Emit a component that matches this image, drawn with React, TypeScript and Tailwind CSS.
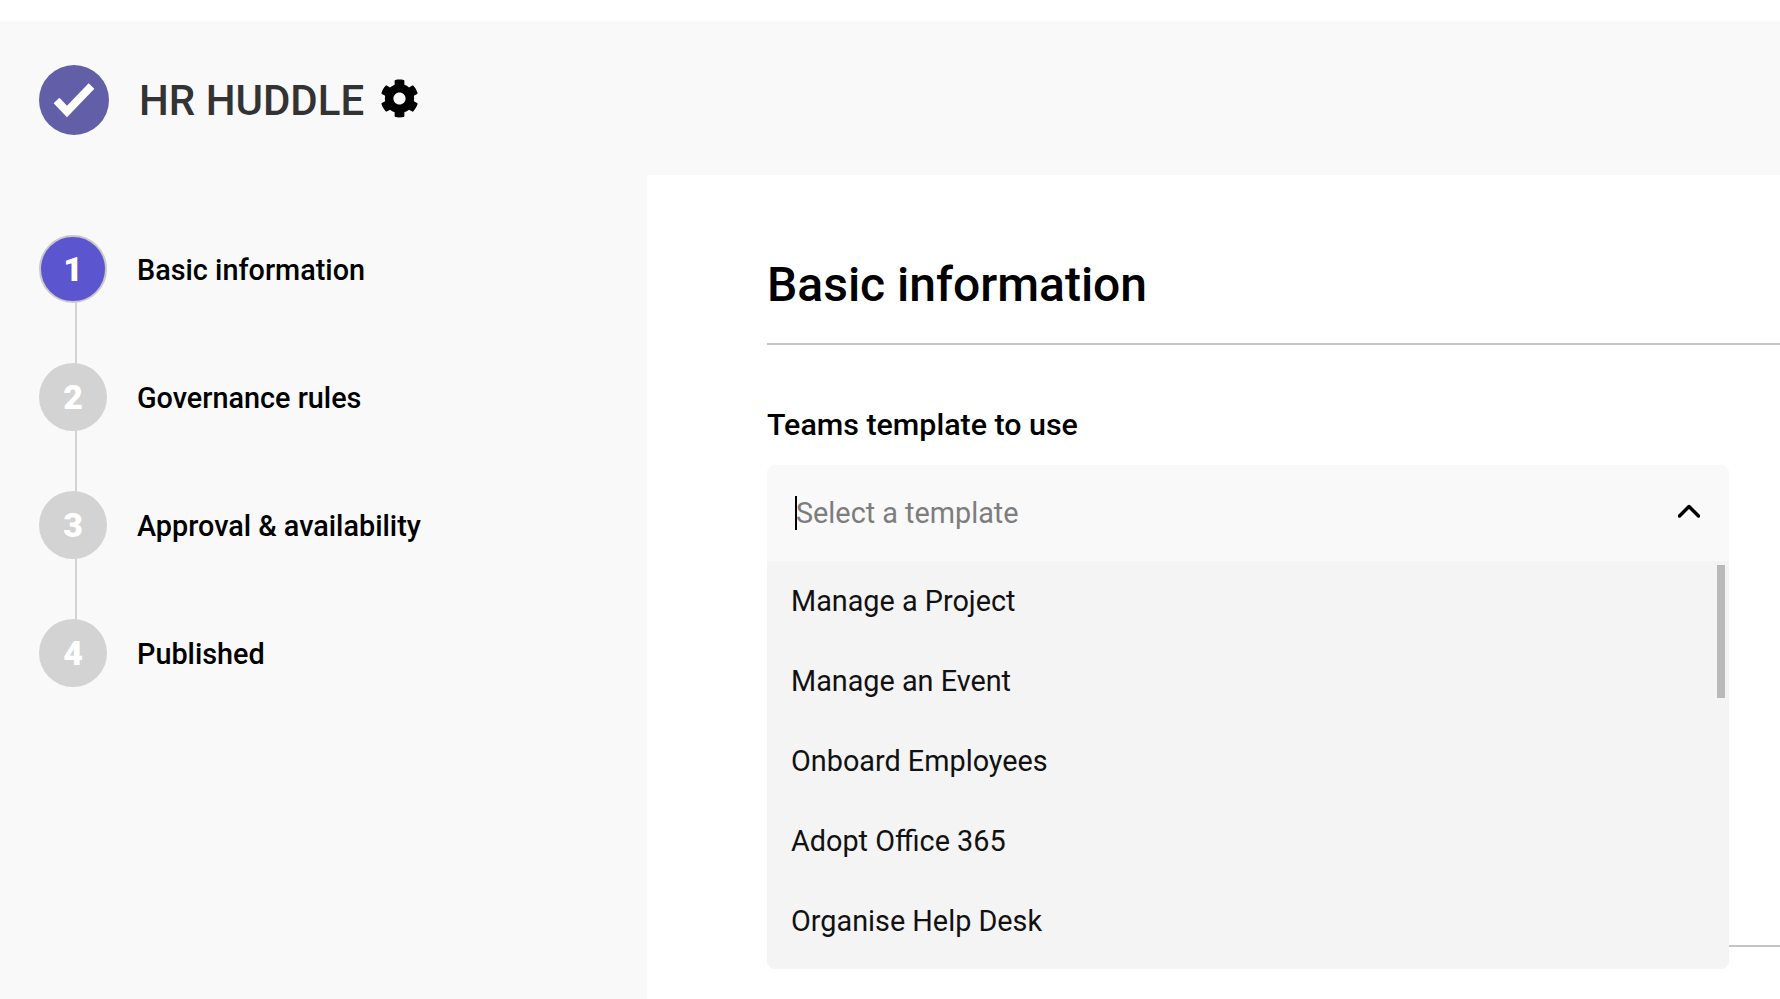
import React from "react";
import { FaCog } from "react-icons/fa";

const steps = [
  { num: 1, label: "Basic information", active: true },
  { num: 2, label: "Governance rules", active: false },
  { num: 3, label: "Approval & availability", active: false },
  { num: 4, label: "Published", active: false },
];

const templates = [
  "Manage a Project",
  "Manage an Event",
  "Onboard Employees",
  "Adopt Office 365",
  "Organise Help Desk",
];

const Stepper = () => (
  <div className="relative flex flex-col gap-[60px] pl-[39px] pt-[60px]">
    <div className="absolute left-[75px] top-[100px] h-[400px] w-[2px] bg-[#d3d3d3]" />
    {steps.map((step) => (
      <div key={step.num} className="relative flex h-[68px] items-center">
        <div
          className={`flex h-[68px] w-[68px] items-center justify-center rounded-full text-[34px] font-black text-white ${
            step.active ? "border-2 border-[#c9c9c9] bg-[#5b55d0]" : "bg-[#d3d3d3]"
          }`}
        >
          {step.num}
        </div>
        <span className="ml-[30px] pt-[4px] text-[28.8px] font-medium text-black">{step.label}</span>
      </div>
    ))}
  </div>
);

const TemplateSelect = () => (
  <div className="absolute left-0 top-[60px] w-[962px]">
    <div className="flex h-[96px] items-center justify-between rounded-t-lg bg-[#f9f9f9] pl-[28px] pr-[29px]">
      <div className="flex items-center">
        <span className="h-[34px] w-[2px] bg-black" />
        <span className="-ml-[1px] pt-[2px] text-[28.8px] text-[#7d7d7d]">Select a template</span>
      </div>
      <svg className="-mt-[4px]" width="22" height="14" viewBox="0 0 22 14" fill="none">
        <path d="M1.5 12 L11 2.5 L20.5 12" stroke="#000" strokeWidth="3.5" strokeLinecap="round" strokeLinejoin="round" />
      </svg>
    </div>
    <div className="relative h-[408px] rounded-b-lg bg-[#f4f4f4]">
      {templates.map((name) => (
        <div key={name} className="flex h-[80px] items-center pl-[24px] pt-[2px] text-[28.8px] text-[#111111]">
          {name}
        </div>
      ))}
      <div className="absolute right-[4px] top-[4px] h-[133px] w-[8px] bg-[#b9b9b9]" />
    </div>
  </div>
);

export default function App() {
  return (
    <div className="flex h-[999px] w-[1780px] flex-col overflow-hidden bg-white font-['Roboto',sans-serif]">
      <div className="h-[24px] bg-gradient-to-b from-white from-80% to-[#f6f6f6]" />
      <div className="flex h-[151px] items-start bg-[#f9f9f9] pl-[39px] pt-[41px]">
        <div className="h-[70px] w-[70px] rounded-full bg-[#625fa8]">
          <svg width="70" height="70" viewBox="0 0 70 70" fill="none">
            <path d="M17.5 35.5 L28 46.5 L52.5 21" stroke="#fff" strokeWidth="8" />
          </svg>
        </div>
        <span className="ml-[30px] mt-[9px] text-[42px] font-medium leading-[54px] text-[#333333]">HR HUDDLE</span>
        <FaCog className="ml-[16px] mt-[14px] text-[39px] text-black" />
      </div>
      <div className="flex flex-1">
        <aside className="w-[647px] bg-[#f9f9f9]">
          <Stepper />
        </aside>
        <main className="flex-1 bg-white pl-[120px] pt-[78px]">
          <h1 className="text-[48px] font-medium leading-[64px] text-black">Basic information</h1>
          <div className="mt-[26px] h-[2px] bg-[#c4c4c4]" />
          <div className="relative">
            <h2 className="mt-[60px] text-[30.4px] font-medium leading-[40px] text-black">Teams template to use</h2>
            <TemplateSelect />
            <div className="mt-[500px] h-[2px] bg-[#c4c4c4]" />
          </div>
        </main>
      </div>
    </div>
  );
}
